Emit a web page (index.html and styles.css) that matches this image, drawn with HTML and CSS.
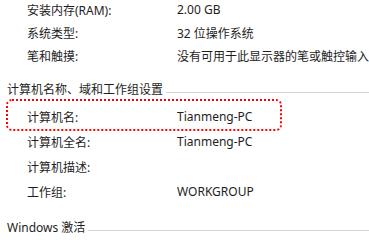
FILE: index.html
```html
<!DOCTYPE html>
<html lang="zh-CN">
<head>
<meta charset="utf-8">
<link rel="stylesheet" href="styles.css">
</head>
<body>
<div class="page">
  <div class="group group-sys">
    <div class="row"><span class="label">安装内存(RAM):</span><span class="value">2.00 GB</span></div>
    <div class="row"><span class="label">系统类型:</span><span class="value">32 位操作系统</span></div>
    <div class="row"><span class="label">笔和触摸:</span><span class="value">没有可用于此显示器的笔或触控输入</span></div>
  </div>
  <div class="heading heading-name"><span class="heading-text">计算机名称、域和工作组设置</span><span class="rule"></span></div>
  <div class="group group-name">
    <div class="row row-tall"><span class="label">计算机名:</span><span class="value">Tianmeng-PC</span></div>
    <div class="row row-tall"><span class="label">计算机全名:</span><span class="value">Tianmeng-PC</span></div>
    <div class="row row-tall"><span class="label">计算机描述:</span><span class="value"></span></div>
    <div class="row row-tall"><span class="label">工作组:</span><span class="value">WORKGROUP</span></div>
  </div>
  <div class="heading heading-win"><span class="heading-text">Windows 激活</span><span class="rule"></span></div>
  <div class="highlight"></div>
</div>
</body>
</html>
```

FILE: styles.css
```css
html, body {
  margin: 0;
  padding: 0;
  background: #ffffff;
}
body {
  width: 369px;
  height: 240px;
  overflow: hidden;
  font-family: "Noto Sans", "Noto Sans CJK SC", sans-serif;
  font-size: 12px;
  color: #1e1e1e;
}
.page {
  position: relative;
  height: 240px;
}
.group-sys {
  margin-top: -2px;
}
.group-name {
  padding-top: 4px;
}
.row {
  display: grid;
  grid-template-columns: 150px 1fr;
  height: 23px;
  align-items: center;
  padding-left: 27px;
  white-space: nowrap;
}
.row-tall {
  height: 25px;
}
.heading {
  display: flex;
  align-items: center;
  height: 22px;
  padding-left: 7px;
  white-space: nowrap;
}
.heading-name {
  margin-top: 11px;
}
.heading-win {
  margin-top: 12px;
}
.rule {
  flex: 1;
  height: 1px;
  background: #d5d5d5;
  margin-left: 3px;
  margin-top: 7px;
}
.highlight {
  position: absolute;
  left: 6px;
  top: 101px;
  width: 272px;
  height: 28px;
  border: 2px dotted #ff0000;
  border-radius: 6px;
}
```
